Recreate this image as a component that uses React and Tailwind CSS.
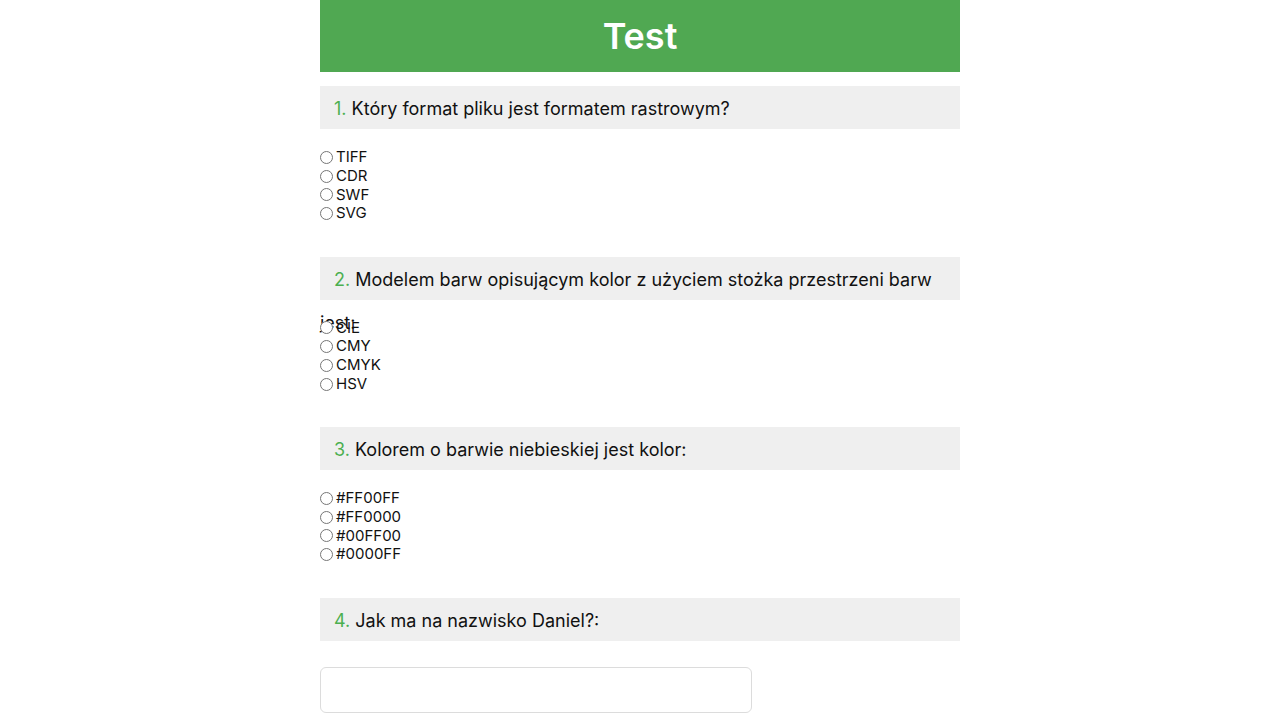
const questions = [
  {
    text: 'Który format pliku jest formatem rastrowym?',
    options: ['TIFF', 'CDR', 'SWF', 'SVG'],
  },
  {
    text: 'Modelem barw opisującym kolor z użyciem stożka przestrzeni barw jest:',
    options: ['CIE', 'CMY', 'CMYK', 'HSV'],
  },
  {
    text: 'Kolorem o barwie niebieskiej jest kolor:',
    options: ['#FF00FF', '#FF0000', '#00FF00', '#0000FF'],
  },
];

function QuestionBox({ num, text }) {
  return (
    <div className="h-[43px] bg-[#efefef] pt-[1px] indent-[14px] text-[18px] leading-[43px] text-[#111]">
      <span className="text-[#4caf50]">{num}.</span> {text}
    </div>
  );
}

export default function App() {
  return (
    <div className="min-h-screen bg-white font-['Inter',sans-serif]">
      <div className="mx-auto w-[640px]">
        <header className="flex h-[72px] items-center justify-center bg-[#50a852]">
          <h1 className="text-[36px] font-semibold text-white">Test</h1>
        </header>

        <div className="pt-[14px]">
          {questions.map((q, i) => (
            <div key={i} className="pb-[33.5px]">
              <QuestionBox num={i + 1} text={q.text} />
              <div className="pt-[19px]">
                {q.options.map((opt) => (
                  <label key={opt} className="flex h-[18.75px] items-center text-[15px] text-[#111]">
                    <input type="radio" name={'q' + i} className="m-0 mr-[3px] h-[13px] w-[13px]" />
                    {opt}
                  </label>
                ))}
              </div>
            </div>
          ))}

          <QuestionBox num={4} text="Jak ma na nazwisko Daniel?:" />
          <div className="pt-[26px]">
            <input
              type="text"
              className="h-[46px] w-[432px] rounded-[6px] border border-[#dcdcdc] px-3 text-[16px] outline-none"
            />
          </div>
        </div>
      </div>
    </div>
  );
}
